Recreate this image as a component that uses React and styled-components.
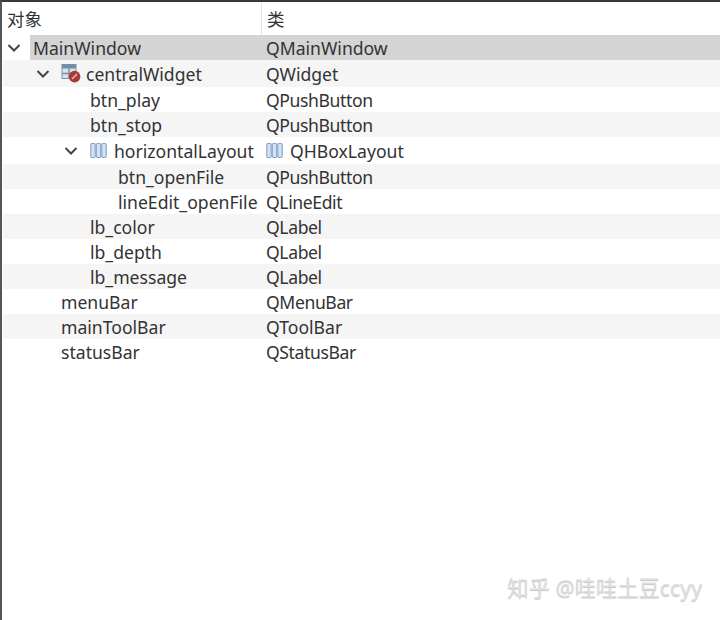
import React from 'react';
import styled, { createGlobalStyle } from 'styled-components';

const GlobalStyle = createGlobalStyle`
  html, body {
    margin: 0;
    padding: 0;
    background: #fff;
  }
`;

const Page = styled.div`
  position: relative;
  width: 720px;
  height: 620px;
  box-sizing: border-box;
  overflow: hidden;
  background: #fff;
  border-top: 2px solid #3a3a3a;
  border-left: 2px solid #555;
  font-family: "Noto Sans", "Noto Sans CJK SC", sans-serif;
  font-size: 17.6px;
  color: #333;
`;

const Header = styled.div`
  display: grid;
  grid-template-columns: 259px 1fr;
  height: 33px;
`;

const HeaderCell = styled.div`
  display: flex;
  align-items: center;
  padding-left: ${p => p.$pad}px;
  font-size: 17.5px;
  border-left: ${p => (p.$divider ? '1px solid #e4e4e4' : 'none')};
`;

const Row = styled.div`
  display: grid;
  grid-template-columns: 259px 1fr;
  height: ${p => (p.$tall ? 27 : 25)}px;
  margin-left: 1px;
  background: ${p => (p.$alt ? '#f5f5f5' : '#fff')};
`;

const NameCell = styled.div`
  display: flex;
  align-items: center;
  height: 100%;
  padding-left: ${p => p.$indent}px;
  white-space: nowrap;
`;

const Arrow = styled.svg`
  width: 14px;
  height: 10px;
  flex: none;
  margin-right: ${p => p.$gap}px;
`;

const SelectedName = styled.span`
  display: flex;
  align-items: center;
  flex: 1;
  align-self: stretch;
  margin-left: -3px;
  padding-left: 3px;
  background: #d4d4d4;
`;

const IconSlot = styled.span`
  display: inline-flex;
  flex: none;
  margin-right: ${p => p.$gap}px;
`;

const ClassCell = styled.div`
  display: flex;
  align-items: center;
  height: 100%;
  padding-left: 4px;
  letter-spacing: ${p => (p.$tight ? '-0.4px' : 'normal')};
  background: ${p => (p.$selected ? '#d4d4d4' : 'transparent')};
  white-space: nowrap;
`;

const Watermark = styled.div`
  position: absolute;
  right: 18px;
  bottom: 18px;
  font-size: 21.3px;
  color: #dedede;
  text-shadow: 0 1px 1px #c4c4c4;
  white-space: nowrap;
`;

const Chevron = ({ gap }) => (
  <Arrow $gap={gap} viewBox="0 0 14 10">
    <path d="M1.5 2 L7 7.5 L12.5 2" fill="none" stroke="#444" strokeWidth="2" />
  </Arrow>
);

const LayoutIcon = () => (
  <svg width="17" height="17" viewBox="0 0 17 17">
    {[0.8, 6.3, 11.8].map(x => (
      <rect key={x} x={x} y="1.5" width="4.4" height="14" rx="1.2" fill="#d4e2f2" stroke="#7fa5cb" strokeWidth="1.1" />
    ))}
  </svg>
);

const WidgetIcon = () => (
  <svg width="20" height="19" viewBox="0 0 20 19">
    <rect x="1" y="0.5" width="14" height="14" fill="#d9e3ec" stroke="#7c95ab" />
    <rect x="1" y="0.5" width="14" height="4" fill="#6f8ea8" />
    <path d="M1 9.5H15M8 4.5V14.5" stroke="#6f8ea8" strokeWidth="1.4" />
    <circle cx="13.6" cy="12.6" r="5.8" fill="#a93a36" />
    <path d="M11 15L16 10" stroke="#e9c6c3" strokeWidth="1.3" />
  </svg>
);

const rows = [
  { name: 'MainWindow', cls: 'QMainWindow', indent: 4, arrow: true, arrowGap: 12, selected: true },
  { name: 'centralWidget', cls: 'QWidget', indent: 33, arrow: true, arrowGap: 11, icon: 'widget', tall: true, alt: true },
  { name: 'btn_play', cls: 'QPushButton', tight: true, indent: 87 },
  { name: 'btn_stop', cls: 'QPushButton', tight: true, indent: 87, alt: true },
  { name: 'horizontalLayout', cls: 'QHBoxLayout', indent: 61, arrow: true, arrowGap: 12, icon: 'layout', tall: true },
  { name: 'btn_openFile', cls: 'QPushButton', tight: true, indent: 115, alt: true },
  { name: 'lineEdit_openFile', cls: 'QLineEdit', tight: true, indent: 115 },
  { name: 'lb_color', cls: 'QLabel', tight: true, indent: 87, alt: true },
  { name: 'lb_depth', cls: 'QLabel', tight: true, indent: 87 },
  { name: 'lb_message', cls: 'QLabel', tight: true, indent: 87, alt: true },
  { name: 'menuBar', cls: 'QMenuBar', tight: true, indent: 58 },
  { name: 'mainToolBar', cls: 'QToolBar', indent: 58, alt: true },
  { name: 'statusBar', cls: 'QStatusBar', tight: true, indent: 58 },
];

const App = () => (
  <>
    <GlobalStyle />
    <Page>
      <Header>
        <HeaderCell $pad={5}>对象</HeaderCell>
        <HeaderCell $pad={5} $divider>类</HeaderCell>
      </Header>
      {rows.map(row => (
        <Row key={row.name} $tall={row.tall} $alt={row.alt}>
          <NameCell $indent={row.indent}>
            {row.arrow && <Chevron gap={row.arrowGap} />}
            {row.icon === 'widget' && <IconSlot $gap={5}><WidgetIcon /></IconSlot>}
            {row.icon === 'layout' && <IconSlot $gap={7}><LayoutIcon /></IconSlot>}
            {row.selected ? <SelectedName>{row.name}</SelectedName> : row.name}
          </NameCell>
          <ClassCell $selected={row.selected} $tight={row.tight}>
            {row.icon === 'layout' && <IconSlot $gap={7}><LayoutIcon /></IconSlot>}
            {row.cls}
          </ClassCell>
        </Row>
      ))}
      <Watermark>知乎 @哇哇土豆ccyy</Watermark>
    </Page>
  </>
);

export default App;
